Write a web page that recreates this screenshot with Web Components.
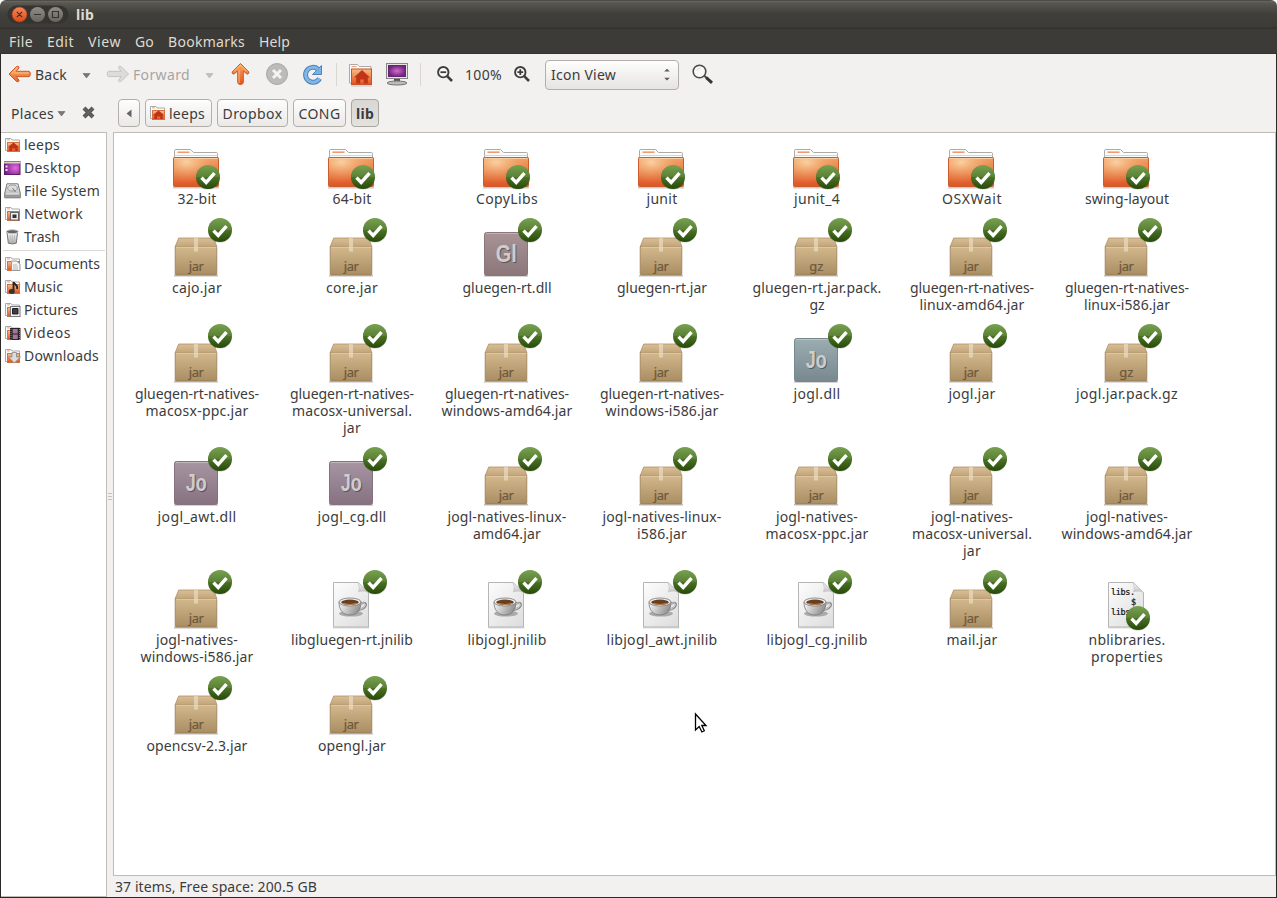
<!DOCTYPE html>
<html lang="en"><head><meta charset="utf-8"><title>lib</title>
<style>
html,body{margin:0;height:100%;background:#fff;overflow:hidden}
body{font:14px/17px "Noto Sans","Open Sans",sans-serif;color:#3c3c3c}
</style></head><body>
<file-window></file-window>
<script>
const define=(name,css,html,setup)=>customElements.define(name,class extends HTMLElement{
  connectedCallback(){
    if(this.shadowRoot)return;
    const root=this.attachShadow({mode:'open'});
    const t=document.createElement('template');
    t.innerHTML='<style>*{box-sizing:border-box}'+css+'</style>'+(typeof html==='function'?html(this):html);
    root.append(t.content.cloneNode(true));
    if(setup)setup(this,root);
  }
});

/* A single line of text tracked to an exact advance width. */
define('fit-text',':host{display:inline-block;white-space:nowrap;flex:none}',
  '<span><slot></slot></span>',
  (el,root)=>{
    const w=+el.getAttribute('w'),s=root.querySelector('span'),n=el.textContent.length;
    el.style.width=w+'px';
    const nat=s.getBoundingClientRect().width;
    s.style.letterSpacing=((w-nat)/n).toFixed(3)+'px';
  });

const grad=(id,a,b,x2=0,y2=1)=>`<linearGradient id="${id}" x1="0" y1="0" x2="${x2}" y2="${y2}"><stop offset="0" stop-color="${a}"/><stop offset="1" stop-color="${b}"/></linearGradient>`;
const emblem=(x,y)=>`<defs>${grad('em','#6f9a48','#264a06')}</defs><ellipse cx="${x}" cy="${y+1}" rx="12" ry="11.6" fill="#000" opacity=".18"/><circle cx="${x}" cy="${y}" r="12" fill="url(#em)"/><path d="M${x-12} ${y}a12 12 0 0 1 24 0z" fill="#9abf6c" opacity=".2"/><path d="M${x-6.5} ${y+.6}l4.700 4.900 8.300-9.300" fill="none" stroke="#fff" stroke-width="3.400"/>`;
const smallFolder=`<defs>${grad('sf','#f7c08c','#dd4f1c')}</defs><path d="M3 13.500H1.500v-12h5.500l1 1.500h7.500v3" fill="#fff" stroke="#a9a9a9"/><path d="M3 2.900h3" stroke="#ee9a70"/><rect x="3.500" y="5.500" width="12" height="9" fill="url(#sf)" stroke="#d5713f"/>`;
const page=`<defs>${grad('pg','#fdfdfd','#dfdfdf',.8,1)}${grad('fold','#fff','#bdbdbd')}</defs><path d="M18 57.8h36.5" stroke="#000" opacity=".2"/><path d="M18.5 12.5H43L53.5 22.5V57h-35z" fill="url(#pg)" stroke="#b5b5b5"/><path d="M43 12.5c1.500 4 1.500 6.500 .5 9.300 3-1 7-1 10 .7z" fill="url(#fold)" stroke="#c6c6c6" stroke-width=".8"/>`;
const box=label=>[72,61,`<defs>${grad('b1','#d3b88e','#a98d63')}${grad('b2','#d9bf97','#c2a378')}</defs><path d="M14 57.800h44" stroke="#000" stroke-width="1.500" opacity=".25"/><path d="M18.700 20h35l3.300 9H15z" fill="url(#b2)" stroke="#b09066" stroke-width=".8"/><rect x="15.200" y="28.700" width="41.600" height="28.200" rx=".8" fill="url(#b1)" stroke="#997a50" stroke-width=".8"/><path d="M16 29.200h40.500" stroke="#e6d1ad"/><path d="M34 20h4v13.500h-4z" fill="#eadbc0" opacity=".7"/><text x="36.300" y="53.300" text-anchor="middle" font-family="Noto Sans,sans-serif" font-size="13" textLength="${label=='jar'?15:14}" fill="#6e5839" stroke="#6e5839" stroke-width=".2">${label}</text>${emblem(60,12)}`];
const tile=(label,a,b)=>[72,61,`<defs>${grad('t',a,b)}</defs><path d="M14 58h44" stroke="#000" stroke-width="1.500" opacity=".22"/><rect x="14.500" y="14.500" width="43" height="43" rx="2" fill="url(#t)" stroke="${b}"/><path d="M16 15.500h40" stroke="#fff" opacity=".3"/><g font-family="Liberation Sans,sans-serif" font-weight="700" font-size="24" text-anchor="middle"><text x="37.300" y="45" textLength="21" lengthAdjust="spacingAndGlyphs" fill="#000" opacity=".35">${label}</text><text x="36.300" y="44" textLength="21" lengthAdjust="spacingAndGlyphs" fill="#cfcccc">${label}</text></g>${emblem(60,12)}`];
const glass=(inner)=>[16,16,`<circle cx="6.300" cy="6.200" r="5.200" fill="#f8f8f6" stroke="#3d3d3b" stroke-width="1.900"/><path d="M10.200 10.200l4.800 4.800" stroke="#3d3d3b" stroke-width="2.600"/><path d="${inner}" stroke="#3d3d3b" stroke-width="1.800"/>`];
const arrow='M1 9L8.500 1.500Q10 .8 11 2v.8L8.300 6.300H21Q22.300 6.500 22.300 9T21 11.600H8.300L11 15.200V16Q10 17.200 8.500 16.500z';

const icons={
 folder:[72,42,`<defs>${grad('f1','#f0a066','#dd5524')}<radialGradient id="f2" cx=".28" cy=".15" r=".75"><stop offset="0" stop-color="#fbdcae" stop-opacity=".85"/><stop offset=".5" stop-color="#f8bd85" stop-opacity=".45"/><stop offset="1" stop-color="#f0a066" stop-opacity="0"/></radialGradient></defs><path d="M13 39.800h46" stroke="#000" stroke-width="1.400" opacity=".2"/><path d="M14.500 30V2.800q0-1.300 1.300-1.300h14.700l3 3h23q1 0 1 1V12h-43z" fill="#fcfcfc" stroke="#aaa"/><path d="M17.500 4.200h12" stroke="#f09a70" stroke-width="1.600"/><path d="M14.500 7.500h43" stroke="#d5d5d5"/><rect x="13.500" y="9.500" width="45" height="29" rx=".8" fill="url(#f1)" stroke="#cb5c2f"/><rect x="14" y="10" width="44" height="28" fill="url(#f2)"/><path d="M14.500 10.500h43" stroke="#f9cda0"/>${emblem(48,29)}`],
 jar:box('jar'),gz:box('gz'),
 dllGl:tile('Gl','#a89496','#8b7779'),dllJo:tile('Jo','#9badb1','#77898e'),dllJp:tile('Jo','#a895a2','#857180'),
 java:[72,61,`${page}<defs>${grad('cup','#fafafa','#929292',1,.3)}</defs><ellipse cx="36" cy="43.600" rx="12" ry="3" fill="#aaa"/><path d="M46 33.500c7-3 7 5-3 6.500" fill="none" stroke="#888" stroke-width="2.200"/><path d="M46 33.500c6-2.500 6 4.500-2 6" fill="none" stroke="#eee" stroke-width=".8"/><path d="M24 32c0 8 4 13 11 13s11-5 11-13z" fill="url(#cup)" stroke="#777" stroke-width=".8"/><ellipse cx="35" cy="32" rx="11" ry="4" fill="#eee" stroke="#777" stroke-width=".8"/><ellipse cx="35" cy="32.300" rx="8.800" ry="2.700" fill="#684020"/><path d="M28 33.500q7 2 14 0" stroke="#bb8550" fill="none"/>${emblem(60,12)}`],
 props:[72,61,`${page}<g font-family="DejaVu Sans Mono,monospace" font-size="8.500" fill="#111" stroke="#111" stroke-width=".2"><text x="21" y="25" textLength="24">libs.</text><text x="41" y="35">$</text><text x="21" y="45" textLength="24">libs.</text></g>${emblem(48,48)}`],
 home:[17,16,smallFolder+'<path d="M3.800 10.300L9.500 5.500l5.700 4.800h-1.500V14h-2.500v-2.500H8V14H5.300v-3.700z" fill="#bf3312"/>'],
 bighome:[26,24,`<defs>${grad('bh','#f8bd85','#e2511c')}</defs><path d="M3 20H1.500V1.500h8l2 2h11.500V7" fill="#fcfcfc" stroke="#aaa"/><path d="M3.500 3.600h5" stroke="#f09a70"/><rect x="3.500" y="6" width="20" height="15.500" fill="url(#bh)" stroke="#c9502a"/><path d="M3 23h21" stroke="#999" opacity=".5"/><path d="M6 14.500L14 7l8 7.500h-2.200v6h-4v-4h-3.600v4h-4v-6z" fill="#c03417"/>`],
 desktop:[17,16,`<defs><radialGradient id="dk" cx=".7" cy=".5" r=".7"><stop offset="0" stop-color="#e26be0"/><stop offset="1" stop-color="#79208c"/></radialGradient></defs><rect x=".5" y="1.500" width="15.500" height="13" fill="url(#dk)" stroke="#5c1b66"/><path d="M0 2.500h16.500" stroke="#d8cfc0" stroke-width="2"/><path d="M1.500 6.500h2M1.500 10h2" stroke="#f3dff5" stroke-width="2"/>`],
 disk:[17,16,`<defs>${grad('hd','#f4f4f4','#aaa')}</defs><path d="M3 .8h11l2.300 9.500v4.500H.7v-4.500z" fill="url(#hd)" stroke="#777"/><ellipse cx="8.500" cy="5" rx="4.800" ry="3" fill="#ddd" stroke="#999"/><path d="M8.500 5l3 4" stroke="#777"/><rect x="1.500" y="11" width="14" height="3" fill="#999"/><path d="M2 11h13" stroke="#eee"/>`],
 network:[17,16,smallFolder+'<rect x="6.500" y="6.500" width="8" height="7.500" fill="#eee" stroke="#666"/><path d="M8.500 8.500h4v3.500h-4z" fill="#333"/>'],
 trash:[17,16,`<defs>${grad('tr','#fff','#a5a5a5')}</defs><path d="M3 3l1.300 11.200q4 1.500 8 0L13.600 3z" fill="url(#tr)" stroke="#777"/><path d="M6 6l.5 7M8.300 6v7M10.600 6l-.5 7" stroke="#bbb"/><ellipse cx="8.300" cy="2.700" rx="6" ry="2" fill="#666" stroke="#ccc"/>`],
 docs:[17,16,smallFolder+'<path d="M7.500 5h5l3.500 3v6.500H7.500z" fill="#f4f4f4" stroke="#999"/><path d="M9 9h4M9 11h5M9 13h5" stroke="#aaa" stroke-width=".8"/>'],
 music:[17,16,smallFolder+'<path d="M9.500 12V3c1 3 5 3 3.500 7" fill="none" stroke="#222" stroke-width="1.800"/><ellipse cx="7.800" cy="12.500" rx="2.900" ry="2.500" fill="#333"/>'],
 pictures:[17,16,smallFolder+'<rect x="6.500" y="4.500" width="9.500" height="10" fill="#f4f4f4" stroke="#777"/><path d="M8.500 6.500h5.500v5.500H8.500z" fill="#423650" stroke="#222"/>'],
 videos:[17,16,smallFolder+'<rect x="6" y="3" width="10.500" height="12" fill="#2e2228"/><path d="M8.700 4h5v4.500h-5zM8.700 9.500h5v4.500h-5z" fill="#9f7898"/><path d="M7 4v11M15.500 4v11" stroke="#c99" stroke-width=".7" stroke-dasharray="1 1"/>'],
 downloads:[17,16,smallFolder+'<path d="M8 4.500h4.500v4.500H16.500L10.300 15 4.500 9h3.500z" fill="#ddd" stroke="#888" stroke-width=".8"/>'],
 back:[24,18,`<defs>${grad('ba','#f9b069','#e8652c')}</defs><path d="${arrow}" fill="url(#ba)" stroke="#d0571d" stroke-linejoin="round"/><path d="M3.500 9L9 3.500M6 8h15" stroke="#ffd6a8" fill="none" opacity=".7"/>`],
 forward:[24,18,`<path transform="matrix(-1 0 0 1 23.500 0)" d="${arrow}" fill="#dedcd9" stroke="#c6c3bf"/>`],
 up:[19,24,`<defs>${grad('up','#f7ad62','#e8511b')}</defs><path d="M9.500 .5L17.800 9q.4 1.500-1 2h-.8L12.300 8v11.500q-.3 2-2.800 2t-2.800-2V8L3 11h-.8q-1.400-.5-1-2z" fill="url(#up)" stroke="#cf541e"/><path d="M3 8.500l6.500-6.500L16 8.500M8 7v13" fill="none" stroke="#ffd39d" opacity=".7"/>`],
 stop:[23,24,`<circle cx="12" cy="11" r="10.500" fill="#bdbbb8" stroke="#aaa8a5"/><path d="M8 7l8 8m0-8l-8 8" stroke="#f4f3f1" stroke-width="3"/>`],
 reload:[22,22,`<path d="M17.600 14.500A7.500 7.500 0 1 1 16 5.200" fill="none" stroke="#4c84be" stroke-width="5"/><path d="M19.500 1.500v9H10.500z" fill="#7bb0e2" stroke="#4c84be" stroke-linejoin="round"/><path d="M17.600 14.500A7.500 7.500 0 1 1 16 5.200" fill="none" stroke="#83b5e5" stroke-width="3"/>`],
 computer:[24,24,`<defs><radialGradient id="cm"><stop offset="0" stop-color="#d66bd0"/><stop offset="1" stop-color="#70267f"/></radialGradient></defs><rect x="1.500" y=".5" width="21" height="15" fill="#e6e5e2" stroke="#868686"/><rect x="3.500" y="2.500" width="17" height="11" fill="url(#cm)" stroke="#642770"/><path d="M9 16h6v3H9z" fill="#555"/><ellipse cx="12" cy="20" rx="10" ry="2" fill="#bbb" stroke="#777"/>`],
 zoomout:glass('M3.400 6.200h5.800'),zoomin:glass('M3.400 6.200h5.800M6.300 3.300v5.800'),
 search:[23,22,`<circle cx="7.500" cy="7.500" r="6.300" fill="#f8f8f7" stroke="#4a4a48" stroke-width="1.600"/><path d="M4.500 7q1-3 4-3" fill="none" stroke="#ddd"/><path d="M12 11.500l3 2.700" stroke="#4a4a48" stroke-width="2"/><path d="M14.300 13.700l5.700 5.100" stroke="#333" stroke-width="3"/>`],
 down:[9,6,'<path d="M1 .5h7L4.500 5z" fill="#7a7875" stroke="#666" stroke-width=".6"/>'],
 downoff:[9,6,'<path d="M1 .5h7L4.500 5z" fill="#c2bfbb" stroke="#b5b2ae" stroke-width=".6"/>'],
 left:[6,9,'<path d="M5.500 .5v8L.5 4.500z" fill="#666"/>'],
 spin:[8,13,'<path d="M1.200 3.500L4 .7l2.800 2.800zM1.200 9.800L4 12.600 6.800 9.800z" fill="#5c5b58"/>'],
 close:[13,13,'<path d="M2 2l9 9m0-9l-9 9" stroke="#555350" stroke-width="4"/><path d="M2 2l9 9m0-9l-9 9" stroke="#777" stroke-width="1.500" opacity=".5"/>'],
 controls:[62,20,`<defs>${grad('c1','#f88756','#e04a18')}${grad('c2','#8f8d85','#66645d')}</defs><rect x=".5" y=".5" width="61" height="18" rx="9" fill="#353430"/><circle cx="12.500" cy="9.500" r="7.500" fill="url(#c1)" stroke="#a43c16" stroke-width=".7"/><circle cx="30.500" cy="9.500" r="7.500" fill="url(#c2)"/><circle cx="48.500" cy="9.500" r="7.500" fill="url(#c2)"/><path d="M9.800 6.800l5.400 5.400m0-5.400l-5.400 5.400M27 9.500h7M45.500 6.500h6v6h-6z" fill="none" stroke="#35342f" stroke-width="1.200"/>`],
 cursor:[15,21,'<path d="M1.500 1v16l3.700-3.500 2.700 5.500 2.400-1.200L7.800 12.500H12z" fill="#fff" stroke="#000" stroke-width="1.300"/>']
};
define('ui-icon',':host{display:block;flex:none}svg{display:block;overflow:visible}',el=>{
  const [w,h,s]=icons[el.getAttribute('name')];
  return `<svg width="${w}" height="${h}" viewBox="0 0 ${w} ${h}">${s}</svg>`;
});

define('title-bar',':host{display:flex;align-items:center;height:29px;padding:0 0 0 7px;gap:7px;color:#dfdbd2;font-weight:700;background:linear-gradient(#33322e 0,#686760 1px,#57564f 3px,#403f3a 14px,#3c3b37 27px,#32312d 28px)}',
 '<ui-icon name="controls"></ui-icon><fit-text w="18">lib</fit-text>');
define('menu-bar',':host{display:flex;align-items:center;height:25px;padding:1px 9px 0;gap:14px;color:#dfdbd2;background:#3c3b37;border-bottom:1px solid #33322e}',
 [['File',24],['Edit',27],['View',33],['Go',19],['Bookmarks',77],['Help',31]].map(([t,w])=>`<fit-text w="${w}">${t}</fit-text>`).join(''));
define('tool-bar',`:host{display:flex;align-items:center;height:41px;padding-left:7px}
 .off{color:#a8a5a1}.sep{width:1px;height:23px;background:#dad7d3}
 .combo{display:flex;align-items:center;justify-content:space-between;width:134px;height:30px;border:1px solid #b3afa8;border-radius:4px;padding:0 7px 0 5px;background:linear-gradient(#fefefe,#e6e4e1)}`,
 `<ui-icon name="back" style="margin-top:-2px"></ui-icon><fit-text w="32" style="margin-left:3px">Back</fit-text>
 <ui-icon name="down" style="margin:2px 0 0 15px"></ui-icon>
 <ui-icon name="forward" style="margin:-2px 0 0 15px"></ui-icon><fit-text class="off" w="57" style="margin-left:3px">Forward</fit-text>
 <ui-icon name="downoff" style="margin:2px 0 0 15px"></ui-icon>
 <ui-icon name="up" style="margin-left:17px"></ui-icon><ui-icon name="stop" style="margin-left:15px"></ui-icon><ui-icon name="reload" style="margin-left:14px"></ui-icon>
 <span class="sep" style="margin-left:12px"></span><ui-icon name="bighome" style="margin-left:11px"></ui-icon><ui-icon name="computer" style="margin-left:11px"></ui-icon><span class="sep" style="margin-left:11px"></span>
 <ui-icon name="zoomout" style="margin:-2px 0 0 16px"></ui-icon><fit-text w="37" style="margin-left:12px">100%</fit-text><ui-icon name="zoomin" style="margin:-2px 0 0 12px"></ui-icon>
 <div class="combo" style="margin-left:15px"><fit-text w="65">Icon View</fit-text><ui-icon name="spin"></ui-icon></div>
 <ui-icon name="search" style="margin-left:13px"></ui-icon>`);
define('path-button',`:host{display:flex;align-items:center;justify-content:center;gap:3px;height:28px;border:1px solid #b3afa8;border-radius:4px;background:linear-gradient(#fdfdfd,#ebe9e7);box-sizing:border-box}
 :host([active]){background:linear-gradient(#d9d7d4,#e4e2df);border-color:#aaa69f;font-weight:700}`,'<slot></slot>');
define('location-bar',':host{display:flex;align-items:center;height:37px;padding:0 0 1px 10px}path-button+path-button{margin-left:5px}',
 `<fit-text w="43">Places</fit-text><ui-icon name="down" style="margin:2px 0 0 3px"></ui-icon><ui-icon name="close" style="margin:-1px 23px 0 16px"></ui-icon>
 <path-button style="width:22px"><ui-icon name="left"></ui-icon></path-button>
 <path-button style="width:67px"><ui-icon name="home" style="margin-left:-3px"></ui-icon><fit-text w="36">leeps</fit-text></path-button>
 <path-button style="width:71px"><fit-text w="60">Dropbox</fit-text></path-button>
 <path-button style="width:53px"><fit-text w="42">CONG</fit-text></path-button>
 <path-button active style="width:28px"><fit-text w="18">lib</fit-text></path-button>`);
define('place-item',':host{display:flex;align-items:center;height:23px;gap:3px;padding-left:3px}',
 el=>`<ui-icon name="${el.getAttribute('icon')}"></ui-icon><fit-text w="${el.getAttribute('w')}">${el.getAttribute('label')}</fit-text>`);
const place=([i,l,w])=>`<place-item icon="${i}" label="${l}" w="${w}"></place-item>`;
define('places-pane',':host{display:block;width:106px;flex:none;background:#fff;border:1px solid #bfbbb5;border-left:0;box-sizing:border-box}hr{border:0;height:1px;background:#dcdad7;margin:2px 1px 1px 2px}',
 [['home','leeps',36],['desktop','Desktop',57],['disk','File System',76],['network','Network',59],['trash','Trash',36]].map(place).join('')+'<hr>'+
 [['docs','Documents',76],['music','Music',39],['pictures','Pictures',54],['videos','Videos',47],['downloads','Downloads',75]].map(place).join(''));

const widths={'32-bit':39,'64-bit':39,'CopyLibs':62,'junit':31,'junit_4':46,'OSXWait':60,'swing-layout':84,'cajo.jar':50,'core.jar':52,'gluegen-rt.dll':89,'gluegen-rt.jar':90,'gluegen-rt.jar.pack.':129,'gz':15,'gluegen-rt-natives-':124,'linux-amd64.jar':105,'linux-i586.jar':86,'macosx-ppc.jar':103,'macosx-universal.':120,'jar':18,'windows-amd64.jar':131,'windows-i586.jar':113,'jogl.dll':47,'jogl.jar':47,'jogl.jar.pack.gz':102,'jogl_awt.dll':79,'jogl_cg.dll':69,'jogl-natives-linux-':119,'amd64.jar':68,'i586.jar':50,'jogl-natives-':82,'libgluegen-rt.jnilib':122,'libjogl.jnilib':79,'libjogl_awt.jnilib':111,'libjogl_cg.jnilib':101,'mail.jar':51,'nblibraries.':77,'properties':72,'opencsv-2.3.jar':101,'opengl.jar':68};
define('file-item',':host{display:flex;flex-direction:column;align-items:center}ui-icon{margin-left:-1px}fit-text{margin-left:1px}',
 el=>`<ui-icon name="${el.getAttribute('icon')}"></ui-icon>`+el.getAttribute('label').split('|').map(t=>`<fit-text w="${widths[t]}">${t}</fit-text>`).join(''));
const files=`folder 32-bit
folder 64-bit
folder CopyLibs
folder junit
folder junit_4
folder OSXWait
folder swing-layout
jar cajo.jar
jar core.jar
dllGl gluegen-rt.dll
jar gluegen-rt.jar
gz gluegen-rt.jar.pack.|gz
jar gluegen-rt-natives-|linux-amd64.jar
jar gluegen-rt-natives-|linux-i586.jar
jar gluegen-rt-natives-|macosx-ppc.jar
jar gluegen-rt-natives-|macosx-universal.|jar
jar gluegen-rt-natives-|windows-amd64.jar
jar gluegen-rt-natives-|windows-i586.jar
dllJo jogl.dll
jar jogl.jar
gz jogl.jar.pack.gz
dllJp jogl_awt.dll
dllJp jogl_cg.dll
jar jogl-natives-linux-|amd64.jar
jar jogl-natives-linux-|i586.jar
jar jogl-natives-|macosx-ppc.jar
jar jogl-natives-|macosx-universal.|jar
jar jogl-natives-|windows-amd64.jar
jar jogl-natives-|windows-i586.jar
java libgluegen-rt.jnilib
java libjogl.jnilib
java libjogl_awt.jnilib
java libjogl_cg.jnilib
jar mail.jar
props nblibraries.|properties
jar opencsv-2.3.jar
jar opengl.jar`.split('\n').map(l=>l.split(' '));
define('file-pane',`:host{display:block;position:relative;flex:1;background:#fff;border:1px solid #bfbbb5;box-sizing:border-box}
 .grid{display:grid;grid-template-columns:repeat(7,155px);row-gap:11px;padding:15px 0 0 5px}
 .cursor{position:absolute;left:580px;top:580px}`,
 '<div class="grid">'+files.map(([i,l])=>`<file-item icon="${i}" label="${l}"></file-item>`).join('')+'</div><ui-icon class="cursor" name="cursor"></ui-icon>');
define('status-bar',':host{display:flex;align-items:center;height:21px;padding-left:2px;flex:none}','<fit-text w="202">37 items, Free space: 200.5 GB</fit-text>');
define('pane-grip',':host{width:6px;flex:none;display:flex;flex-direction:column;gap:2px;align-items:center;justify-content:center;padding-bottom:37px;box-sizing:border-box}i{width:4px;height:1px;background:#c5c2bd}','<i></i><i></i><i></i>');
define('file-window',`:host{display:flex;flex-direction:column;width:1277px;height:898px;box-sizing:border-box;border-radius:6px 6px 0 0;overflow:hidden;background:#f2f1f0}
 .body{display:flex;flex-direction:column;flex:1;border:solid #2b2a27;border-width:0 1px 1px;min-height:0}
 .panes{display:flex;flex:1;min-height:0}.main{display:flex;flex-direction:column;flex:1}`,
 `<title-bar></title-bar><menu-bar></menu-bar><div class="body"><tool-bar></tool-bar><location-bar></location-bar>
 <div class="panes"><places-pane></places-pane><pane-grip></pane-grip><div class="main"><file-pane></file-pane><status-bar></status-bar></div></div></div>`);
</script>
</body></html>
